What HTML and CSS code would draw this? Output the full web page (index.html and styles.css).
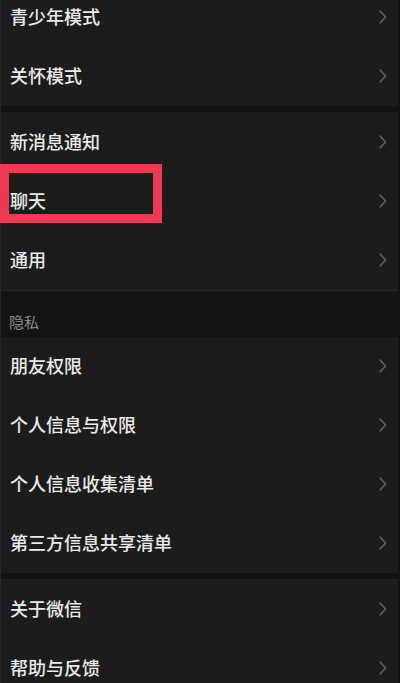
FILE: index.html
```html
<!DOCTYPE html>
<html lang="zh-CN">
<head>
<meta charset="utf-8">
<title>设置</title>
<link rel="stylesheet" href="styles.css">
</head>
<body>
<div class="screen">
  <div class="group first">
    <div class="row"><span class="label">青少年模式</span><svg class="chev" viewBox="0 0 8 14"><path d="M1.2 1.2 L6.6 7 L1.2 12.8"/></svg></div>
    <div class="row"><span class="label">关怀模式</span><svg class="chev" viewBox="0 0 8 14"><path d="M1.2 1.2 L6.6 7 L1.2 12.8"/></svg></div>
  </div>
  <div class="divider"></div>
  <div class="group">
    <div class="row"><span class="label">新消息通知</span><svg class="chev" viewBox="0 0 8 14"><path d="M1.2 1.2 L6.6 7 L1.2 12.8"/></svg></div>
    <div class="row highlighted"><span class="label">聊天</span><svg class="chev" viewBox="0 0 8 14"><path d="M1.2 1.2 L6.6 7 L1.2 12.8"/></svg><span class="mark"></span></div>
    <div class="row"><span class="label">通用</span><svg class="chev" viewBox="0 0 8 14"><path d="M1.2 1.2 L6.6 7 L1.2 12.8"/></svg></div>
  </div>
  <div class="section-title">隐私</div>
  <div class="group">
    <div class="row"><span class="label">朋友权限</span><svg class="chev" viewBox="0 0 8 14"><path d="M1.2 1.2 L6.6 7 L1.2 12.8"/></svg></div>
    <div class="row"><span class="label">个人信息与权限</span><svg class="chev" viewBox="0 0 8 14"><path d="M1.2 1.2 L6.6 7 L1.2 12.8"/></svg></div>
    <div class="row"><span class="label">个人信息收集清单</span><svg class="chev" viewBox="0 0 8 14"><path d="M1.2 1.2 L6.6 7 L1.2 12.8"/></svg></div>
    <div class="row"><span class="label">第三方信息共享清单</span><svg class="chev" viewBox="0 0 8 14"><path d="M1.2 1.2 L6.6 7 L1.2 12.8"/></svg></div>
  </div>
  <div class="divider"></div>
  <div class="group">
    <div class="row"><span class="label">关于微信</span><svg class="chev" viewBox="0 0 8 14"><path d="M1.2 1.2 L6.6 7 L1.2 12.8"/></svg></div>
    <div class="row"><span class="label">帮助与反馈</span><svg class="chev" viewBox="0 0 8 14"><path d="M1.2 1.2 L6.6 7 L1.2 12.8"/></svg></div>
  </div>
</div>
</body>
</html>
```
FILE: styles.css
```css
html, body {
  margin: 0;
  padding: 0;
  background: #1b1b1b;
  height: 100%;
  overflow: hidden;
}
body {
  font-family: "Noto Sans CJK SC", "Noto Sans", sans-serif;
}
.screen {
  width: 400px;
  display: flex;
  flex-direction: column;
  border-left: 1px solid #262626;
  border-right: 2px solid #121212;
  box-sizing: border-box;
}
.group {
  display: flex;
  flex-direction: column;
  background: #1c1c1c;
}
.group.first {
  margin-top: -12px;
}
.row {
  position: relative;
  height: 59px;
  box-sizing: border-box;
  display: flex;
  align-items: center;
  justify-content: space-between;
  padding: 0 11px 4px 9px;
}
.label {
  color: #ebebeb;
  font-size: 18px;
  line-height: 22px;
  font-weight: 500;
}
.chev {
  width: 8px;
  height: 14px;
  margin-top: 3px;
  fill: none;
  stroke: #5a5a5a;
  stroke-width: 1.8;
  stroke-linecap: round;
  stroke-linejoin: round;
}
.divider {
  height: 6px;
  background: #121212;
  border-bottom: 1px solid #202020;
}
.section-title {
  height: 47px;
  box-sizing: border-box;
  padding: 21px 0 0 8px;
  background: #141414;
  border-top: 1px solid #2a2a2a;
  color: #8c8c8c;
  font-size: 15px;
  line-height: 20px;
}
.mark {
  position: absolute;
  left: -1px;
  top: -8px;
  width: 162px;
  height: 59px;
  box-sizing: border-box;
  border: 9px solid #ec3a52;
}
```
